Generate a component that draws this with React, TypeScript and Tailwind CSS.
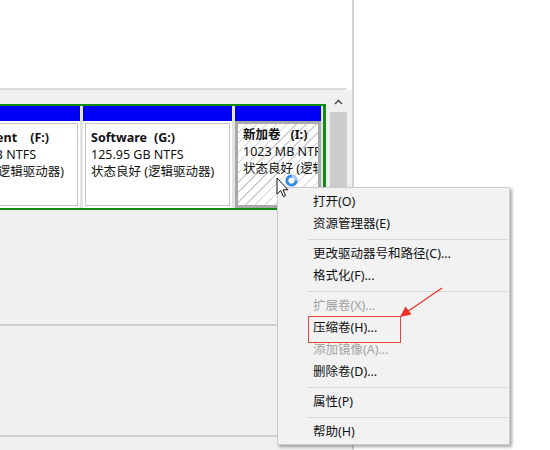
import React from "react";

const Item = ({ label, disabled }: { label: string; disabled?: boolean }) => (
  <div className={`h-[22px] flex items-center pl-[35px] whitespace-nowrap ${disabled ? "text-[#a3a3a3]" : "text-[#111]"}`}>
    {label}
  </div>
);

const Sep = () => (
  <div className="h-[8px] flex items-center pl-[30px] pr-[2px]">
    <div className="h-px flex-1 bg-[#d6d6d6]" />
  </div>
);

export default function App() {
  return (
    <div className="relative w-[550px] h-[450px] overflow-hidden bg-white flex text-[12.5px] text-[#111] font-['Noto_Sans','Noto_Sans_CJK_SC',sans-serif]">
      {/* left pane */}
      <div className="w-[354px] h-full flex flex-col border-r-2 border-[#d2d2d2]">
        <div className="h-[90px] shrink-0 bg-white border-b-2 border-[#d9d9d9] mr-[6px]" />
        {/* disk row */}
        <div className="h-[120px] shrink-0 bg-[#f0f0f0] flex">
          <div className="w-[326px] pt-[14px]">
            <div className="h-[106px] border-t-2 border-b-2 border-r-[3px] border-[#138a13] bg-[#e4e4e4] flex gap-[3px] pr-[2px]">
              {/* partition F */}
              <div className="w-[80px] flex flex-col">
                <div className="h-[15px] bg-[#0000f4]" />
                <div className="flex-1 bg-white p-[2px] pl-0">
                  <div className="h-full border border-l-0 border-[#c4c4c4] overflow-hidden pt-[5px] leading-[17px]">
                    <div className="flex justify-end pr-[28px] font-bold">
                      <span className="shrink-0 whitespace-nowrap">Document</span>
                      <span className="shrink-0 whitespace-nowrap ml-[13px]">(F:)</span>
                    </div>
                    <div className="flex justify-end pr-[41px]">
                      <span className="shrink-0 whitespace-nowrap">58.59 GB NTFS</span>
                    </div>
                    <div className="flex justify-end pr-[13px]">
                      <span className="shrink-0 whitespace-nowrap">状态良好 (逻辑驱动器)</span>
                    </div>
                  </div>
                </div>
              </div>
              {/* partition G */}
              <div className="w-[149px] flex flex-col">
                <div className="h-[15px] bg-[#0000f4]" />
                <div className="flex-1 bg-white p-[2px]">
                  <div className="h-full border border-[#c4c4c4] overflow-hidden pt-[5px] pl-[5px] leading-[17px] whitespace-nowrap">
                    <div className="font-bold flex">
                      <span>Software</span>
                      <span className="ml-[7px]">(G:)</span>
                    </div>
                    <div>125.95 GB NTFS</div>
                    <div>状态良好 (逻辑驱动器)</div>
                  </div>
                </div>
              </div>
              {/* partition I (selected) */}
              <div className="w-[86px] flex flex-col">
                <div className="h-[15px] bg-[#0000f4]" />
                <div className="flex-1 border-[3px] border-[#a9a9a9] bg-[repeating-linear-gradient(135deg,#ffffff_0px,#ffffff_6px,#cfcfcf_6px,#cfcfcf_7px)] overflow-hidden pt-[2px] pl-[5px] leading-[17px] whitespace-nowrap">
                  <div className="font-bold flex">
                    <span>新加卷</span>
                    <span className="ml-[10px]">(I:)</span>
                  </div>
                  <div>1023 MB NTFS</div>
                  <div>状态良好 (逻辑驱动器)</div>
                </div>
              </div>
            </div>
          </div>
          <div className="w-[4px]" />
          {/* scrollbar */}
          <div className="w-[17px] flex flex-col pt-[2px]">
            <div className="h-[20px] flex items-center justify-center">
              <svg width="9" height="6" viewBox="0 0 9 6">
                <path d="M1 5 L4.5 1.5 L8 5" fill="none" stroke="#555" strokeWidth="1.6" />
              </svg>
            </div>
            <div className="flex-1 bg-[#cdcdcd]" />
          </div>
        </div>
        {/* lower area */}
        <div className="flex-1 bg-[#f0f0f0] flex flex-col">
          <div className="h-[116px] border-b-2 border-[#cfcfcf]" />
          <div className="h-[111px] border-b-2 border-[#d2d2d2]" />
        </div>
      </div>
      <div className="flex-1 bg-white" />

      {/* context menu */}
      <div className="absolute left-[277px] top-[187px] w-[233px] bg-[#f2f2f2] border border-[#cccccc] shadow-[2px_2px_3px_rgba(0,0,0,0.35)] pt-[3px] pb-[1px]">
        <Item label="打开(O)" />
        <Item label="资源管理器(E)" />
        <Sep />
        <Item label="更改驱动器号和路径(C)..." />
        <Item label="格式化(F)..." />
        <Sep />
        <Item label="扩展卷(X)..." disabled />
        <Item label="压缩卷(H)..." />
        <Item label="添加镜像(A)..." disabled />
        <Item label="删除卷(D)..." />
        <Sep />
        <Item label="属性(P)" />
        <Sep />
        <Item label="帮助(H)" />
      </div>

      {/* red highlight box */}
      <div className="absolute left-[308px] top-[316px] w-[93px] h-[27px] border border-[#e8453c]" />

      {/* red arrow */}
      <svg className="absolute left-[395px] top-[280px]" width="55" height="45" viewBox="0 0 55 45">
        <line x1="47" y1="8" x2="12" y2="32" stroke="#f0302a" strokeWidth="1.2" />
        <path d="M5 37 L10.5 26.5 L16.5 34.5 Z" fill="#f0302a" />
      </svg>

      {/* cursor */}
      <svg className="absolute left-[276px] top-[170px]" width="30" height="30" viewBox="0 0 30 30">
        <circle cx="15.5" cy="10.5" r="4.6" fill="#fff" stroke="#2f8ae8" strokeWidth="3" />
        <path d="M15.5 5.9 A4.6 4.6 0 0 1 20.1 10.5" fill="none" stroke="#a8d0f7" strokeWidth="3" />
        <path d="M1 8 L1 24 L4.7 20.5 L7.4 26.6 L9.6 25.6 L7 19.8 L12 19.8 Z" fill="#fff" stroke="#111" strokeWidth="1" strokeLinejoin="round" />
      </svg>
    </div>
  );
}
